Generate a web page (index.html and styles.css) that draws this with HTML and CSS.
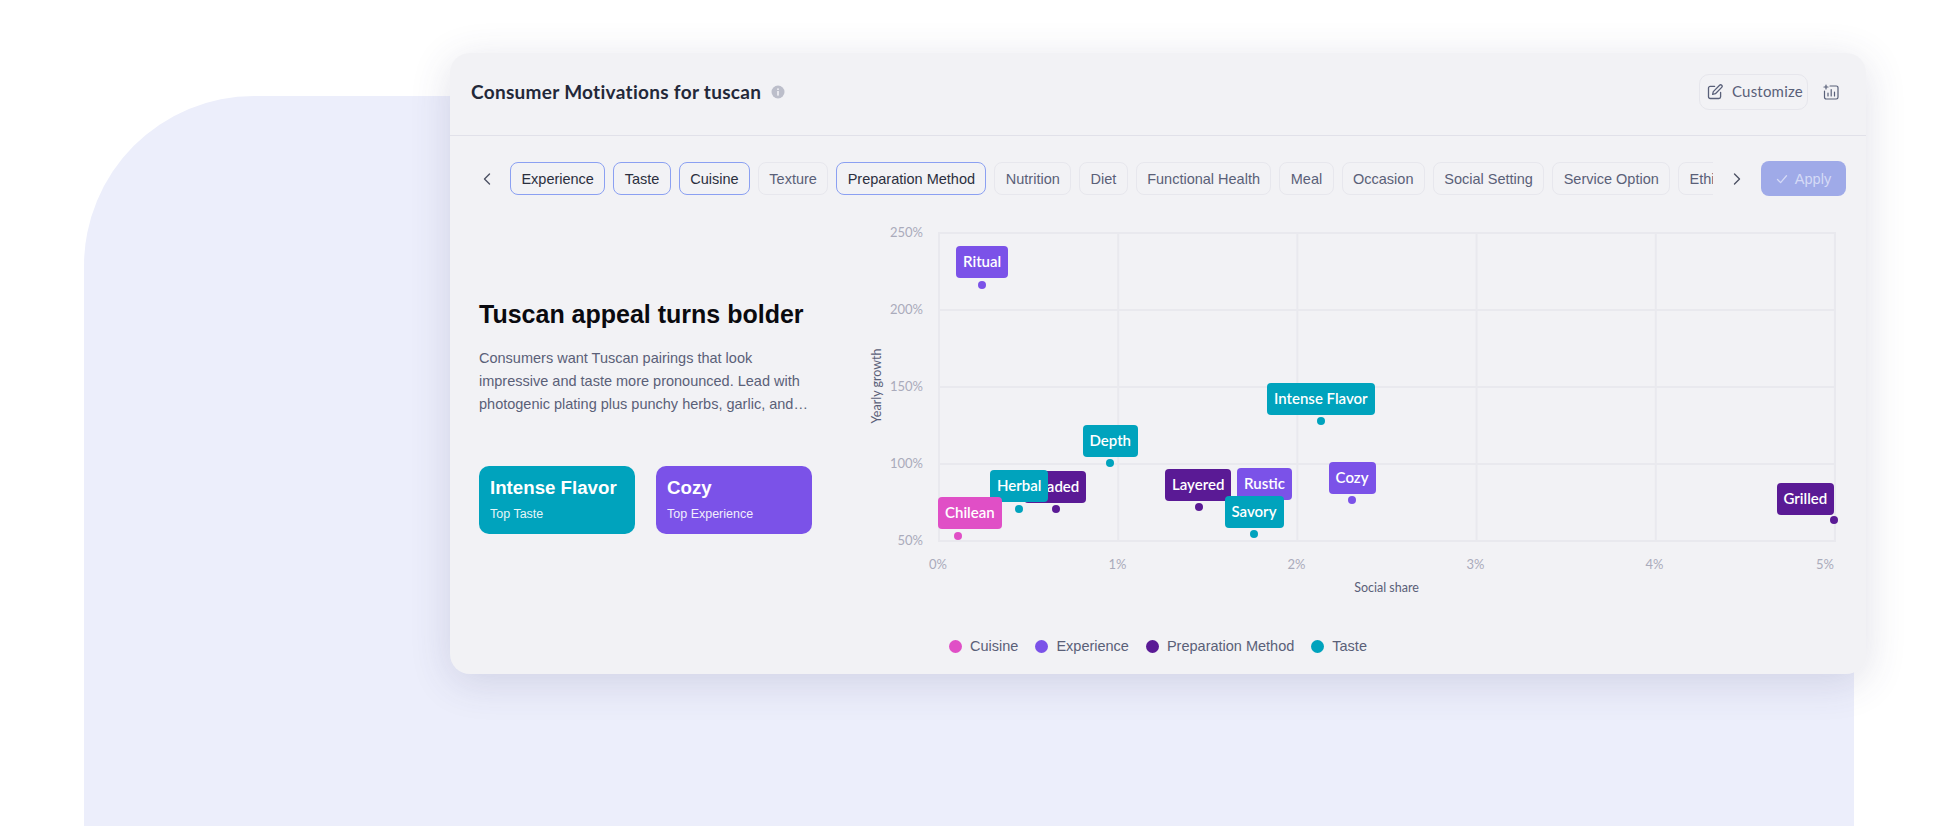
FILE: index.html
```html
<!DOCTYPE html>
<html lang="en">
  <head>
    <meta charset="UTF-8" />
    <link rel="stylesheet" href="styles.css">
    <title>Consumer Motivations</title>
  </head>
  <body>
    <div class="backdrop"></div>
    <section class="card">
      <header class="cardHead">
        <div class="titleWrap">
          <h1>Consumer Motivations for tuscan</h1>
          <svg class="infoIcon" viewBox="0 0 14 14" width="14" height="14">
            <circle cx="7" cy="7" r="6.5" fill="#bcbeca" />
            <rect x="6.2" y="6" width="1.6" height="4.6" fill="#f2f2f5" />
            <rect x="6.2" y="3.4" width="1.6" height="1.6" fill="#f2f2f5" />
          </svg>
        </div>
        <div class="headActions">
          <button class="customizeBtn">
            <svg viewBox="0 0 16 16" width="16" height="16" fill="none" stroke="#596079" stroke-width="1.3" stroke-linecap="round" stroke-linejoin="round">
              <path d="M7.6 2.4H3.2a1.7 1.7 0 0 0-1.7 1.7v8.7a1.7 1.7 0 0 0 1.7 1.7h8.7a1.7 1.7 0 0 0 1.7-1.7V8.4" />
              <path d="M12.6 1.3a1.4 1.4 0 0 1 2.1 2.1L8.4 9.7l-2.8.7.7-2.8z" />
            </svg>
            <span>Customize</span>
          </button>
          <svg class="chartIcon" viewBox="0 0 16 16" width="16" height="16" fill="none" stroke="#596079" stroke-width="1.2" stroke-linecap="round" stroke-linejoin="round">
            <path d="M7 2h6.3A1.7 1.7 0 0 1 15 3.7v9.6a1.7 1.7 0 0 1-1.7 1.7H3.2a1.7 1.7 0 0 1-1.7-1.7V7" />
            <path d="M5 12V9M8.2 12V5.5M11.5 12V8" />
            <path d="M3 1v4M1 3h4" />
          </svg>
        </div>
      </header>

      <div class="filterRow">
        <button class="arrowBtn">
          <svg viewBox="0 0 12 14" width="12" height="14" fill="none" stroke="#4c5163" stroke-width="1.4" stroke-linecap="round" stroke-linejoin="round"><path d="M8.5 2 3.5 7l5 5" /></svg>
        </button>
        <div class="chips">
          <span class="chip active">Experience</span>
          <span class="chip active">Taste</span>
          <span class="chip active">Cuisine</span>
          <span class="chip">Texture</span>
          <span class="chip active">Preparation Method</span>
          <span class="chip">Nutrition</span>
          <span class="chip">Diet</span>
          <span class="chip">Functional Health</span>
          <span class="chip">Meal</span>
          <span class="chip">Occasion</span>
          <span class="chip">Social Setting</span>
          <span class="chip">Service Option</span>
          <span class="chip">Ethical</span>
        </div>
        <button class="arrowBtn">
          <svg viewBox="0 0 12 14" width="12" height="14" fill="none" stroke="#4c5163" stroke-width="1.4" stroke-linecap="round" stroke-linejoin="round"><path d="M3.5 2l5 5-5 5" /></svg>
        </button>
        <button class="applyBtn">
          <svg viewBox="0 0 12 12" width="12" height="12" fill="none" stroke="#d5daf6" stroke-width="1.3" stroke-linecap="round" stroke-linejoin="round"><path d="M1.5 6.5 4.6 9.6 10.5 2.8" /></svg>
          Apply
        </button>
      </div>

      <div class="cardBody">
        <div class="summary">
          <h2>Tuscan appeal turns bolder</h2>
          <p>Consumers want Tuscan pairings that look impressive and taste more pronounced. Lead with photogenic plating plus punchy herbs, garlic, and…</p>
          <div class="stats">
            <div class="stat taste">
              <strong>Intense Flavor</strong>
              <span>Top Taste</span>
            </div>
            <div class="stat experience">
              <strong>Cozy</strong>
              <span>Top Experience</span>
            </div>
          </div>
        </div>

        <div class="chart">
          <div class="plot">
            <span class="yTitle">Yearly growth</span>

            <span class="yTick" style="top:0">250%</span>
            <span class="yTick" style="top:77px">200%</span>
            <span class="yTick" style="top:154px">150%</span>
            <span class="yTick" style="top:231px">100%</span>
            <span class="yTick" style="top:308px">50%</span>

            <span class="xTick" style="left:0">0%</span>
            <span class="xTick" style="left:179.5px">1%</span>
            <span class="xTick" style="left:358.5px">2%</span>
            <span class="xTick" style="left:537.5px">3%</span>
            <span class="xTick" style="left:716.5px">4%</span>
            <span class="xTick" style="left:887px">5%</span>

            <i class="dot experience" style="left:43.5px;top:52.5px"></i>
            <b class="tag experience" style="left:18px;top:13.5px">Ritual</b>

            <i class="dot taste" style="left:172px;top:231px"></i>
            <b class="tag taste" style="left:144.5px;top:192.5px">Depth</b>

            <i class="dot taste" style="left:383.4px;top:189px"></i>
            <b class="tag taste" style="left:329px;top:151px">Intense Flavor</b>

            <i class="dot experience" style="left:413.7px;top:267.5px"></i>
            <b class="tag experience" style="left:390.6px;top:229.5px">Cozy</b>

            <i class="dot prep" style="left:118px;top:276.5px"></i>
            <b class="tag prep" style="left:86px;top:238.5px">Loaded</b>

            <i class="dot taste" style="left:81px;top:276.5px"></i>
            <b class="tag taste" style="left:52px;top:237.5px">Herbal</b>

            <i class="dot cuisine" style="left:20px;top:303.5px"></i>
            <b class="tag cuisine" style="left:0;top:264.5px">Chilean</b>

            <i class="dot prep" style="left:260.6px;top:275px"></i>
            <b class="tag prep" style="left:227px;top:236.5px">Layered</b>

            <i class="dot experience" style="left:325.5px;top:273px"></i>
            <b class="tag experience" style="left:299px;top:235.5px">Rustic</b>

            <i class="dot taste" style="left:315.8px;top:301.5px"></i>
            <b class="tag taste" style="left:286.5px;top:263.5px">Savory</b>

            <i class="dot prep" style="left:896px;top:288px"></i>
            <b class="tag prep" style="left:838.5px;top:250.5px">Grilled</b>
          </div>
          <div class="xTitle">Social share</div>
        </div>
      </div>

      <ul class="legend">
        <li><i class="swatch cuisine"></i>Cuisine</li>
        <li><i class="swatch experience"></i>Experience</li>
        <li><i class="swatch prep"></i>Preparation Method</li>
        <li><i class="swatch taste"></i>Taste</li>
      </ul>
    </section>
  </body>
</html>
```

FILE: styles.css
```css
* {
  box-sizing: border-box;
}
html,
body {
  height: 826px;
}
body {
  margin: 0;
  background: #fff;
  overflow: hidden;
  font-family: "Liberation Sans", sans-serif;
}

.backdrop {
  width: 1770px;
  height: 730px;
  margin: 96px 0 0 84px;
  background: #eceefb;
  border-top-left-radius: 170px;
}

.card {
  position: absolute;
  left: 450px;
  top: 53px;
  width: 1416px;
  height: 621px;
  background: #f2f2f5;
  border-radius: 20px;
  box-shadow: 0 8px 40px rgba(60, 60, 110, 0.16);
}

.cardHead {
  height: 83px;
  padding: 0 27px 5px 21px;
  display: flex;
  align-items: center;
  justify-content: space-between;
  border-bottom: 1px solid #e1e1e9;
}
.titleWrap {
  display: flex;
  align-items: center;
  gap: 10px;
}
h1 {
  margin: 0;
  font-family: "Lato", sans-serif;
  font-size: 19px;
  font-weight: 700;
  letter-spacing: 0.3px;
  color: #232839;
}
.headActions {
  display: flex;
  align-items: center;
  gap: 15px;
}
.customizeBtn {
  height: 36px;
  width: 109px;
  padding: 0 0 0 7px;
  display: flex;
  align-items: center;
  gap: 9px;
  background: transparent;
  border: 1px solid #e6e6ec;
  border-radius: 10px;
  font-family: "Lato", sans-serif;
  font-size: 15px;
  letter-spacing: 0.2px;
  color: #596079;
}
.customizeBtn span {
  margin-bottom: 2px;
}

.filterRow {
  height: 33px;
  margin-top: 26px;
  padding: 0 20px 0 27px;
  display: flex;
  align-items: center;
}
.arrowBtn {
  width: 20px;
  height: 20px;
  padding: 0;
  flex: none;
  display: flex;
  align-items: center;
  justify-content: center;
  background: none;
  border: none;
}
.chips {
  width: 1203px;
  margin: 0 14px 0 13px;
  flex: none;
  display: flex;
  gap: 8px;
  overflow: hidden;
}
.chip {
  height: 33px;
  padding: 0 10.4px;
  flex: none;
  display: flex;
  align-items: center;
  font-size: 14.5px;
  color: #5a6078;
  border: 1px solid #e7e7ed;
  border-radius: 8px;
}
.chip.active {
  color: #2b2f3e;
  border-color: #8ba0f2;
}
.applyBtn {
  width: 85px;
  height: 35px;
  margin-left: 14px;
  flex: none;
  display: flex;
  align-items: center;
  justify-content: center;
  gap: 7px;
  background: #9faae8;
  border: none;
  border-radius: 8px;
  font-family: "Liberation Sans", sans-serif;
  font-size: 14.5px;
  color: #d5daf6;
}

.cardBody {
  display: flex;
}
.summary {
  width: 459px;
  padding: 104px 0 0 29px;
  flex: none;
}
h2 {
  margin: 0;
  font-size: 25px;
  line-height: 30px;
  font-weight: 700;
  color: #0a0a0f;
}
.summary p {
  margin: 18px 0 0;
  width: 340px;
  font-size: 14.5px;
  line-height: 23px;
  color: #5a6078;
}
.stats {
  margin-top: 50px;
  display: flex;
  gap: 21px;
}
.stat {
  width: 156px;
  height: 68px;
  padding: 10px 11px;
  border-radius: 10px;
  color: #fff;
  white-space: nowrap;
}
.stat strong {
  display: block;
  font-size: 18.7px;
  line-height: 24px;
}
.stat span {
  display: block;
  margin-top: 7px;
  font-size: 12.5px;
  line-height: 15px;
  opacity: 0.9;
}
.taste {
  background: #00a3bd;
}
.experience {
  background: #7b52e8;
}
.prep {
  background: #5a1a95;
}
.cuisine {
  background: #e04fc6;
}

.chart {
  flex: 1;
  padding: 37px 30px 0 29px;
}
.plot {
  position: relative;
  width: 898px;
  height: 310px;
  background-image:
    linear-gradient(to right, #e9e9ee 2px, transparent 2px),
    linear-gradient(to bottom, #e9e9ee 2px, transparent 2px);
  background-size: 179.2px 77px;
  border-right: 2px solid #e9e9ee;
  border-bottom: 2px solid #e9e9ee;
  font-family: "Lato", sans-serif;
}
.yTitle {
  position: absolute;
  left: -62px;
  top: 154px;
  font-size: 12.5px;
  color: #5a6078;
  white-space: nowrap;
  transform: translate(-50%, -50%) rotate(-90deg);
}
.yTick {
  position: absolute;
  right: calc(100% + 15px);
  font-size: 13px;
  line-height: 16px;
  margin-top: -8px;
  color: #aaabbb;
}
.xTick {
  position: absolute;
  top: calc(100% + 16px);
  font-size: 13px;
  line-height: 16px;
  color: #aaabbb;
  transform: translateX(-50%);
}
.dot {
  position: absolute;
  width: 8px;
  height: 8px;
  margin: -4px 0 0 -4px;
  border-radius: 50%;
}
.tag {
  position: absolute;
  height: 32px;
  padding: 0 7px 2px;
  display: flex;
  align-items: center;
  border-radius: 4px;
  font-size: 15px;
  font-weight: 600;
  color: #fff;
  white-space: nowrap;
}
.xTitle {
  margin-top: 38px;
  text-align: center;
  width: 897px;
  font-family: "Lato", sans-serif;
  font-size: 12.5px;
  line-height: 16px;
  color: #5a6078;
}
.legend {
  margin: 41px 0 0;
  padding: 0;
  list-style: none;
  display: flex;
  justify-content: center;
  gap: 17px;
  font-size: 14.5px;
  line-height: 18px;
  color: #5a6078;
}
.legend li {
  display: flex;
  align-items: center;
  gap: 8px;
}
.swatch {
  width: 13px;
  height: 13px;
  border-radius: 50%;
}
```
